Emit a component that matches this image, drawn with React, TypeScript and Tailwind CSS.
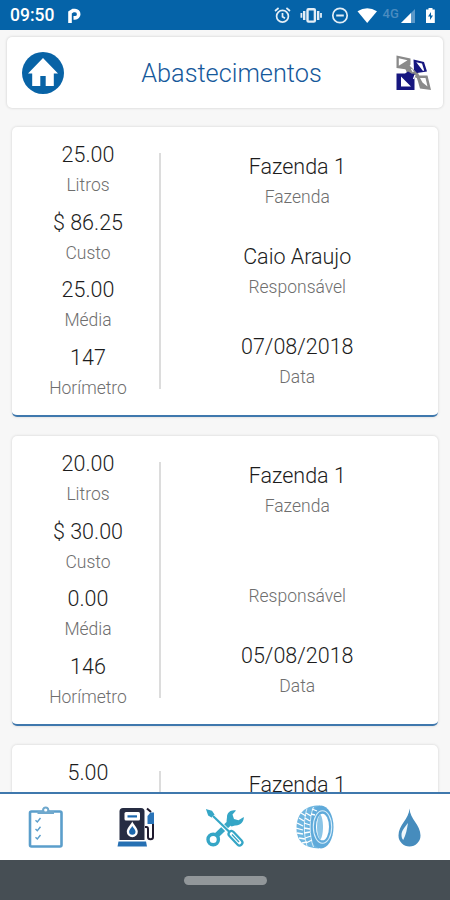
const refuels = [
  {
    id: 147,
    stats: [
      { value: "25.00", label: "Litros" },
      { value: "$ 86.25", label: "Custo" },
      { value: "25.00", label: "Média" },
      { value: "147", label: "Horímetro" },
    ],
    details: [
      { value: "Fazenda 1", label: "Fazenda" },
      { value: "Caio Araujo", label: "Responsável" },
      { value: "07/08/2018", label: "Data" },
    ],
  },
  {
    id: 146,
    stats: [
      { value: "20.00", label: "Litros" },
      { value: "$ 30.00", label: "Custo" },
      { value: "0.00", label: "Média" },
      { value: "146", label: "Horímetro" },
    ],
    details: [
      { value: "Fazenda 1", label: "Fazenda" },
      { value: "", label: "Responsável" },
      { value: "05/08/2018", label: "Data" },
    ],
  },
  {
    id: 145,
    stats: [{ value: "5.00", label: "" }],
    details: [{ value: "Fazenda 1", label: "" }],
  },
];

type Entry = { value: string; label: string };

function Field({ value, label }: Entry) {
  return (
    <div className="h-[60px] text-center leading-[30px]">
      <div className="h-[30px] text-[21.5px] font-light text-[#1c1c1c]">{value}</div>
      <div className="h-[30px] text-[17.5px] font-light text-[#6e6e6e]">{label}</div>
    </div>
  );
}

function RefuelCard({ stats, details }: { stats: Entry[]; details: Entry[] }) {
  return (
    <article className="flex h-[290px] shrink-0 rounded-[5px] border-b-2 border-[#3f78ad] bg-white px-1 shadow-[0_0_3px_rgba(0,0,0,0.16)]">
      <div className="flex w-[143px] flex-col gap-[7.5px] pt-[13px] pl-px">
        {stats.map((s, i) => (
          <Field key={i} {...s} />
        ))}
      </div>
      <div className="mt-[26px] h-[236px] w-[1.5px] bg-[#dcdcdc]" />
      <div className="flex flex-1 flex-col gap-[30px] pt-[25px]">
        {details.map((d, i) => (
          <Field key={i} {...d} />
        ))}
      </div>
    </article>
  );
}

function StatusBar() {
  return (
    <div className="flex h-[30px] shrink-0 items-center justify-between bg-[#0563a8] pl-[10px] pr-[14px] text-white">
      <div className="flex items-center gap-[13px] pt-[2px]">
        <span className="text-[17.5px] font-medium leading-none">09:50</span>
        <svg width="14" height="16" viewBox="0 0 14 16" fill="none" stroke="#fff">
          <path d="M3 15V4.5L6 2.5h2a3.6 3.6 0 0 1 0 7.4H6.5" strokeWidth="3.6" />
        </svg>
      </div>
      <svg width="163" height="20" viewBox="0 0 163 20" fill="none" stroke="#e4eef6" strokeWidth="1.7">
        <circle cx="9.5" cy="11.3" r="5.9" />
        <path d="M9.5 8v3.7l2.5 1.5M2 6l3.6-3M17 6l-3.6-3" />
        <rect x="34.5" y="4.2" width="7.4" height="12.4" rx="1" strokeWidth="2.4" />
        <path d="M31.2 6v9M45.2 6v9" strokeWidth="2.4" />
        <path d="M28.4 8v4.8M48 8v4.8" strokeWidth="1.8" />
        <circle cx="67" cy="10.5" r="7.2" />
        <path d="M63.2 10.5h7.6" strokeWidth="2" />
        <path d="M84.5 6.3Q94.2 0 104 6.3L94.2 18Z" fill="#fff" stroke="none" />
        <text x="109.5" y="12.8" fill="#4a8cc0" stroke="none" className="font-[Roboto] text-[13px] font-medium">
          4G
        </text>
        <path d="M128 18h14V4Z" fill="#5b98c8" stroke="none" />
        <path d="M128 18h10V8Z" fill="#fff" stroke="none" />
        <path d="M153 4.5h2.5V3h4v1.5h2.3V18H153Z" fill="#fff" stroke="none" />
        <path d="m158 7-3 4.5h2V15l3-4.5h-2Z" fill="#0563a8" stroke="none" />
      </svg>
    </div>
  );
}

function HomeIcon() {
  return (
    <svg width="42" height="42" viewBox="0 0 42 42">
      <circle cx="21" cy="21" r="21" fill="#0863a6" />
      <path d="M21 6 6 21.5h4.2V34h8.1V24h5.4v10h8.1V21.5H36Z" fill="#fff" />
    </svg>
  );
}

function BrandMark() {
  return (
    <svg width="36" height="36" viewBox="0 0 36 36">
      <path fillRule="evenodd" d="M.5.5 14.5 3.5v6L11 14.5.5 13ZM2.8 3.2v7.600L11.5 5.200Z" fill="#8a8a8a" />
      <path d="m10 8 4 3 4 4 4 3 2 4-4 1-4-4-5-1-2-5Z" fill="#8a8a8a" />
      <path fillRule="evenodd" d="M17.5 4.5 28 7l3 9.5-10 1.5-3-3ZM20.3 7.2 27 16l1.2-.6L26 8.600Z" fill="#16167f" />
      <path fillRule="evenodd" d="M.5 18.5H9l3-2 4 2.2h2.5V35H.5ZM5 21.5v10h10Z" fill="#16167f" />
      <path fillRule="evenodd" d="M20 20.5h11.5L35 35l-11-1.5-2-7ZM24 23l2.5 4.5 5 4L29.5 23Z" fill="#8a8a8a" />
      <path d="m15.5 14 1.8 3M19 20l-1.5 4" stroke="#fff" strokeWidth="1.3" />
    </svg>
  );
}

function ChecklistIcon() {
  return (
    <svg width="36" height="44" viewBox="0 0 36 44" fill="none" stroke="#5b9ecb">
      <rect x="2" y="6.5" width="31.5" height="35" rx="1.5" strokeWidth="2.6" />
      <path d="M9.5 9V6h4.2l1.1-3h5.8l1.2 3H26v3Z" fill="#6fa8cd" stroke="none" />
      <path d="M17.7 1.5a3.2 3.2 0 0 1 3.2 3.2v1.6h-6.4V4.7a3.2 3.2 0 0 1 3.2-3.2Z" fill="#6fa8cd" stroke="none" />
      <circle cx="17.7" cy="5" r="1.6" fill="#fff" stroke="none" />
      <path d="m7.5 15.3 1.8 1.7 3.2-4M7.5 24l1.8 1.7 3.2-4M7.5 32.3 9.3 34l3.2-4" strokeWidth="1.4" />
    </svg>
  );
}

function FuelPumpIcon() {
  return (
    <svg width="38" height="40" viewBox="0 0 38 40" fill="none">
      <path d="M2.5 33V4.5Q2.5 1 6 1h18q3.5 0 3.5 3.5V33Z" fill="#262c42" />
      <rect x="7.5" y="5" width="15.5" height="8.5" rx="1.5" fill="#fff" />
      <path d="M10.5 9.4H20" stroke="#1c68ae" strokeWidth="2.2" />
      <path d="M15.3 14.5c-2 4-5.5 6.6-5.5 10.2a5.5 5.5 0 0 0 11 0c0-3.6-3.5-6.2-5.5-10.2Z" fill="#fff" />
      <path d="M15.3 19c-1 2-3.2 3.6-3.2 5.6a3.2 3.2 0 0 0 6.4 0c0-2-2.2-3.6-3.2-5.6Z" fill="#1c68ae" />
      <path d="M1.5 34.5H29l1 5H.5Z" fill="#2670b3" />
      <path d="M28 20h1.5q1.5 0 1.5 2v8q0 2.2 2.5 2.2T36 30V17" stroke="#1f1a2e" strokeWidth="2" />
      <path d="m30 1.5 4 3.5" stroke="#1f1a2e" strokeWidth="2" />
      <path d="M33.5 5.5H37V17h-6.5V9Z" fill="#2a74b8" />
    </svg>
  );
}

function ToolsIcon() {
  return (
    <svg width="38" height="39" viewBox="0 0 38 39" fill="none" stroke="#35a6c6">
      <path d="m1.2 2.2 4.3 1.3L8.5 8 7 9.5 2.8 7Z" fill="#35a6c6" strokeWidth="1.6" />
      <path d="m11 27 14-13.500" strokeWidth="5.4" />
      <path d="m7 8 16 16" stroke="#fff" strokeWidth="4" />
      <path d="m7 8 16.500 16" strokeWidth="2.2" />
      <path d="m25.5 26 8 8.5" strokeWidth="8" strokeLinecap="round" />
      <path d="m25.5 26 8 8.5" stroke="#fff" strokeWidth="3.6" strokeLinecap="round" />
      <path d="m26 26.5 7 7.5" strokeWidth="1.3" />
      <circle cx="7.2" cy="31.5" r="5.200" strokeWidth="3.4" />
      <path d="M30 2.500c-5-1-9 2-9 6.500l-.5 4.500 5 5 3.500-1c5 .500 9-3.500 8.800-8.500l-5.300 3.300-4.500-1.300-1.500-4.500Z" fill="#35a6c6" stroke="none" />
    </svg>
  );
}

function TireIcon() {
  return (
    <svg width="38" height="44" viewBox="0 0 38 44" fill="none">
      <path d="M24 .5C11 0 1 7 .5 22S9 43 23 43.5Z" fill="#6fb6e0" />
      <ellipse cx="25" cy="22" rx="12.5" ry="21.5" fill="#5faada" />
      <ellipse cx="26.5" cy="22" rx="9.2" ry="16.3" stroke="#d9eefa" strokeWidth="1.1" />
      <ellipse cx="26.5" cy="22" rx="6.5" ry="13.3" fill="#fff" />
      <path d="M24 9c-4 6-4 20 0 26 4-4 4-22 0-26Z" fill="#8bc5e7" />
      <path d="M11 3.5C7.5 13 7.5 31 11 41M17.5 2C13 13 13 31 17.5 42" stroke="#e4f3fb" strokeWidth=".9" />
      <path
        d="m5 8 5 3M3 13l5 3M1 18l6 3M0 23l7 2M1 28l6 1M3 33l6 1M6 38l5-1M10 8l5 3M9 13l5 3M8 18l6 2M8 23l6 1M8 28l6-1M9 33l6-2M10 38l6-3M16 4l5 2M15 9l4 1"
        stroke="#fff"
        strokeWidth="1.3"
      />
    </svg>
  );
}

function DropIcon() {
  return (
    <svg width="23" height="39" viewBox="0 0 23 39">
      <path d="M11.5.5C11 11 .5 17 .5 27.5a11 11 0 0 0 22 0C22.5 17 12 11 11.5.5Z" fill="#468cbd" />
      <path d="M10 15C6 20 3.5 23 3.5 27c0 2 .7 4 1.7 5C8 27 9 21 10 15Z" fill="#eef6fb" />
    </svg>
  );
}

export default function App() {
  return (
    <div className="flex h-[900px] w-[450px] flex-col overflow-hidden bg-[#f7f7f7] font-[Roboto,sans-serif]">
      <StatusBar />

      <header className="mx-[7px] mt-[7px] flex h-[71px] shrink-0 items-center justify-between rounded-[5px] bg-white pl-[15px] pr-[11px] shadow-[0_0_3px_rgba(0,0,0,0.18)]">
        <HomeIcon />
        <h1 className="pl-[3px] pt-[3px] text-[25.3px] font-light text-[#16599b]">Abastecimentos</h1>
        <BrandMark />
      </header>

      <main className="mt-[11px] flex min-h-0 flex-1 flex-col gap-[19px] overflow-hidden px-3 pt-2">
        {refuels.map((r) => (
          <RefuelCard key={r.id} stats={r.stats} details={r.details} />
        ))}
      </main>

      <nav className="grid h-[68px] shrink-0 grid-cols-5 place-items-center border-t-2 border-[#3f78ad] bg-white pl-px">
        <ChecklistIcon />
        <FuelPumpIcon />
        <ToolsIcon />
        <TireIcon />
        <div className="pl-[9px]">
          <DropIcon />
        </div>
      </nav>

      <div className="flex h-10 shrink-0 items-center justify-center bg-[#464e54]">
        <div className="h-[9px] w-[83px] rounded-full bg-[#92979a]" />
      </div>
    </div>
  );
}
